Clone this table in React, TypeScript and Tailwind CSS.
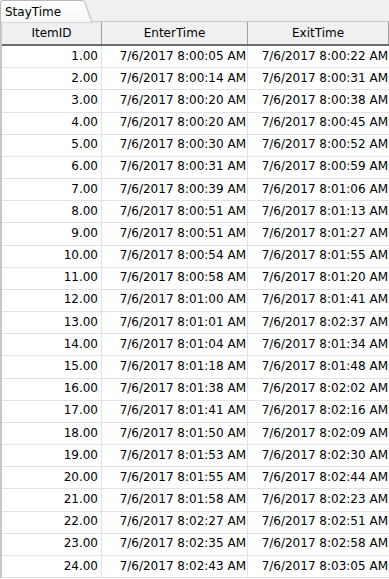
import React from "react";

const rows: [string, string][] = [
  ["8:00:05", "8:00:22"],
  ["8:00:14", "8:00:31"],
  ["8:00:20", "8:00:38"],
  ["8:00:20", "8:00:45"],
  ["8:00:30", "8:00:52"],
  ["8:00:31", "8:00:59"],
  ["8:00:39", "8:01:06"],
  ["8:00:51", "8:01:13"],
  ["8:00:51", "8:01:27"],
  ["8:00:54", "8:01:55"],
  ["8:00:58", "8:01:20"],
  ["8:01:00", "8:01:41"],
  ["8:01:01", "8:02:37"],
  ["8:01:04", "8:01:34"],
  ["8:01:18", "8:01:48"],
  ["8:01:38", "8:02:02"],
  ["8:01:41", "8:02:16"],
  ["8:01:50", "8:02:09"],
  ["8:01:53", "8:02:30"],
  ["8:01:55", "8:02:44"],
  ["8:01:58", "8:02:23"],
  ["8:02:27", "8:02:51"],
  ["8:02:35", "8:02:58"],
  ["8:02:43", "8:03:05"],
];

export default function App() {
  return (
    <div
      className="w-[389px] h-[579px] overflow-hidden bg-white text-[12px] text-black"
      style={{ fontFamily: '"DejaVu Sans", Verdana, sans-serif' }}
    >
      {/* Tab strip */}
      <div className="relative h-[22px] bg-[#f0f0f0] border-b border-[#c8c8c8]">
        <svg
          className="absolute left-0 top-0"
          width="96"
          height="23"
          viewBox="0 0 96 23"
        >
          <defs>
            <linearGradient id="tabg" x1="0" y1="0" x2="0" y2="1">
              <stop offset="0" stopColor="#ffffff" />
              <stop offset="1" stopColor="#f7f7f7" />
            </linearGradient>
          </defs>
          <path
            d="M0.5 23 L0.5 3 Q0.5 0.5 3 0.5 L82 0.5 Q84 0.5 85 2.5 L92 23 Z"
            fill="url(#tabg)"
            stroke="#b9b9b9"
            strokeWidth="1"
          />
        </svg>
        <span className="relative left-[5px] top-[3px] text-[12px] leading-[16px]">
          StayTime
        </span>
      </div>

      {/* Table */}
      <div className="border-l-2 border-[#c6c6c6]">
        <div className="grid grid-cols-[100px_146px_141px] h-[24px] bg-[#f0f0f0] border-b-2 border-[#6e6e6e]">
          <div className="flex items-center justify-center border-r border-[#a0a0a0]">
            ItemID
          </div>
          <div className="flex items-center justify-center border-r border-[#a0a0a0]">
            EnterTime
          </div>
          <div className="flex items-center justify-center border-r border-[#a0a0a0]">
            ExitTime
          </div>
        </div>
        {rows.map(([enter, exit], i) => (
          <div
            key={i}
            className="grid grid-cols-[100px_146px_141px] h-[22.18px] border-b border-[#e2e2e2]"
          >
            <div className="flex items-center justify-end pr-[3px] pb-[2px] border-r border-[#e2e2e2]">
              {(i + 1).toFixed(2)}
            </div>
            <div className="flex items-center justify-end pr-[1px] pb-[2px] border-r border-[#e2e2e2]">
              7/6/2017 {enter} AM
            </div>
            <div className="flex items-center justify-end pr-[1px] pb-[2px]">
              7/6/2017 {exit} AM
            </div>
          </div>
        ))}
      </div>
    </div>
  );
}
